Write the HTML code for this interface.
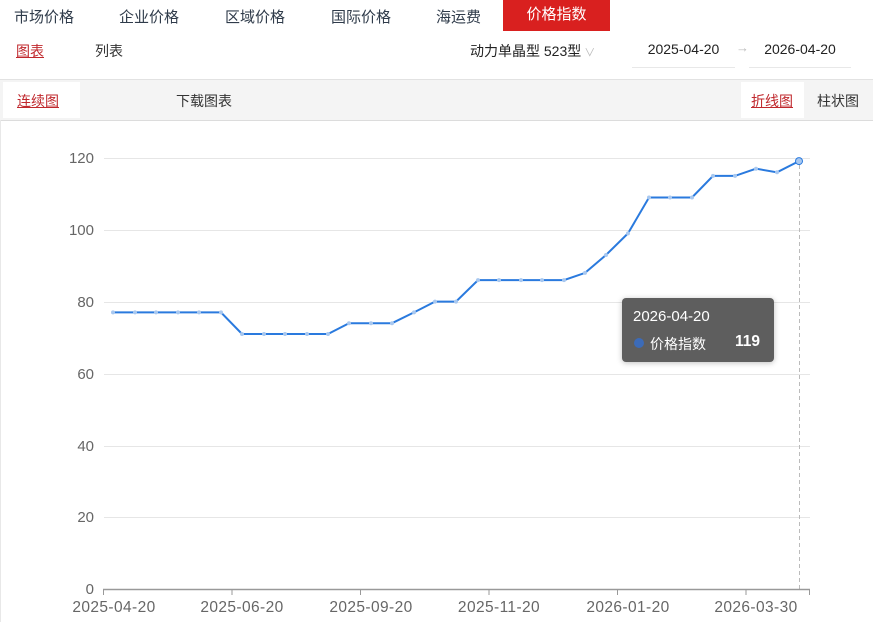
<!DOCTYPE html>
<html><head><meta charset="utf-8"><style>
body{margin:0;width:873px;height:622px;background:#fff;font-family:"Liberation Sans","Noto Sans CJK SC",sans-serif;overflow:hidden;position:relative;color:#333}
.a{position:absolute;white-space:nowrap}
.nav{font-size:15px;color:#2f3b4a;top:6px}
</style></head><body>
<div class="a nav" style="left:14px">市场价格</div>
<div class="a nav" style="left:119px">企业价格</div>
<div class="a nav" style="left:225px">区域价格</div>
<div class="a nav" style="left:331px">国际价格</div>
<div class="a nav" style="left:436px">海运费</div>
<div class="a" style="left:503px;top:0;width:107px;height:31px;background:#d9201f;color:#fff;font-size:15px;text-align:center;line-height:30px">价格指数</div>
<div class="a" style="left:16px;top:41px;font-size:14px;color:#c0282d;text-decoration:underline">图表</div>
<div class="a" style="left:95px;top:41px;font-size:14px;color:#333">列表</div>
<div class="a" style="left:470px;top:41px;font-size:14px;color:#222">动力单晶型 523型<span style="color:#bbb;font-size:11px"> ∨</span></div>
<div class="a" style="left:632px;top:41px;width:103px;text-align:center;font-size:14px;color:#222">2025-04-20</div>
<div class="a" style="left:736px;top:40px;font-size:13px;color:#bbb">→</div>
<div class="a" style="left:749px;top:41px;width:102px;text-align:center;font-size:14px;color:#222">2026-04-20</div>
<div class="a" style="left:632px;top:67px;width:103px;height:1px;background:#e8e8e8"></div>
<div class="a" style="left:749px;top:67px;width:102px;height:1px;background:#e8e8e8"></div>
<div class="a" style="left:0;top:79px;width:873px;height:40px;background:#f4f4f4;border-top:1px solid #e2e2e2;border-bottom:1px solid #dcdcdc"></div>
<div class="a" style="left:3px;top:82px;width:77px;height:36px;background:#fff"></div>
<div class="a" style="left:17px;top:91px;font-size:14px;color:#c0282d;text-decoration:underline">连续图</div>
<div class="a" style="left:176px;top:91px;font-size:14px;color:#333">下载图表</div>
<div class="a" style="left:741px;top:82px;width:63px;height:36px;background:#fff"></div>
<div class="a" style="left:751px;top:91px;font-size:14px;color:#c0282d;text-decoration:underline">折线图</div>
<div class="a" style="left:817px;top:91px;font-size:14px;color:#333">柱状图</div>
<div class="a" style="left:0;top:120px;width:1px;height:502px;background:#e8e8e8"></div>
<svg class="a" style="left:0;top:0" width="873" height="622">
<g stroke="#e6e6e6" stroke-width="1">
<line x1="104" x2="810" y1="158.5" y2="158.5"/><line x1="104" x2="810" y1="230.5" y2="230.5"/><line x1="104" x2="810" y1="302.5" y2="302.5"/><line x1="104" x2="810" y1="374.5" y2="374.5"/><line x1="104" x2="810" y1="446.5" y2="446.5"/><line x1="104" x2="810" y1="517.5" y2="517.5"/>
</g>
<line x1="799.5" x2="799.5" y1="158" y2="589" stroke="#bbb" stroke-dasharray="4,3"/>
<line x1="103" x2="810" y1="589.5" y2="589.5" stroke="#999" stroke-width="1.5"/>
<g stroke="#999"><line x1="103.5" x2="103.5" y1="589" y2="595"/><line x1="232" x2="232" y1="589" y2="595"/><line x1="360.5" x2="360.5" y1="589" y2="595"/><line x1="489" x2="489" y1="589" y2="595"/><line x1="617.5" x2="617.5" y1="589" y2="595"/><line x1="746" x2="746" y1="589" y2="595"/><line x1="809.5" x2="809.5" y1="589" y2="595"/></g>
<g font-size="15" fill="#666" text-anchor="end" font-family="Liberation Sans,sans-serif">
<text x="94" y="163">120</text><text x="94" y="235">100</text><text x="94" y="307">80</text><text x="94" y="379">60</text><text x="94" y="451">40</text><text x="94" y="522">20</text><text x="94" y="594">0</text>
</g>
<g font-size="15.5" fill="#666" text-anchor="middle" font-family="Liberation Sans,sans-serif" letter-spacing="0.4">
<text x="114" y="612">2025-04-20</text><text x="242" y="612">2025-06-20</text><text x="371" y="612">2025-09-20</text><text x="499" y="612">2025-11-20</text><text x="628" y="612">2026-01-20</text><text x="756" y="612">2026-03-30</text>
</g>
<polyline fill="none" stroke="#2a7ade" stroke-width="2" points="113,312.4 135,312.4 156,312.4 178,312.4 199,312.4 221,312.4 242,334 264,334 285,334 307,334 328,334 349,323.2 371,323.2 392,323.2 414,312.4 435,301.6 456,301.6 478,280.1 499,280.1 521,280.1 542,280.1 564,280.1 585,272.9 606,255 628,233.4 649,197.5 670,197.5 692,197.5 713,175.9 735,175.9 756,168.7 777,172.3 799,161.1"/>
<g fill="#a8c8f0">
<circle cx="113" cy="312.4" r="2"/><circle cx="135" cy="312.4" r="2"/><circle cx="156" cy="312.4" r="2"/><circle cx="178" cy="312.4" r="2"/><circle cx="199" cy="312.4" r="2"/><circle cx="221" cy="312.4" r="2"/><circle cx="242" cy="334" r="2"/><circle cx="264" cy="334" r="2"/><circle cx="285" cy="334" r="2"/><circle cx="307" cy="334" r="2"/><circle cx="328" cy="334" r="2"/><circle cx="349" cy="323.2" r="2"/><circle cx="371" cy="323.2" r="2"/><circle cx="392" cy="323.2" r="2"/><circle cx="414" cy="312.4" r="2"/><circle cx="435" cy="301.6" r="2"/><circle cx="456" cy="301.6" r="2"/><circle cx="478" cy="280.1" r="2"/><circle cx="499" cy="280.1" r="2"/><circle cx="521" cy="280.1" r="2"/><circle cx="542" cy="280.1" r="2"/><circle cx="564" cy="280.1" r="2"/><circle cx="585" cy="272.9" r="2"/><circle cx="606" cy="255" r="2"/><circle cx="628" cy="233.4" r="2"/><circle cx="649" cy="197.5" r="2"/><circle cx="670" cy="197.5" r="2"/><circle cx="692" cy="197.5" r="2"/><circle cx="713" cy="175.9" r="2"/><circle cx="735" cy="175.9" r="2"/><circle cx="756" cy="168.7" r="2"/><circle cx="777" cy="172.3" r="2"/><circle cx="799" cy="161.1" r="3.5" stroke="#2a7ade" stroke-width="1"/>
</g>
</svg>
<div class="a" style="left:622px;top:298px;width:152px;height:64px;background:#5e5e5e;border-radius:4px;box-shadow:0 1px 6px rgba(0,0,0,.25);color:#fff">
<div class="a" style="left:11px;top:10px;font-size:15px">2026-04-20</div>
<div class="a" style="left:12px;top:40px;width:10px;height:10px;border-radius:50%;background:#3c6bb8"></div>
<div class="a" style="left:28px;top:36px;font-size:14px">价格指数</div>
<div class="a" style="left:113px;top:35px;font-size:15.5px;font-weight:bold">119</div>
</div>
</body></html>
